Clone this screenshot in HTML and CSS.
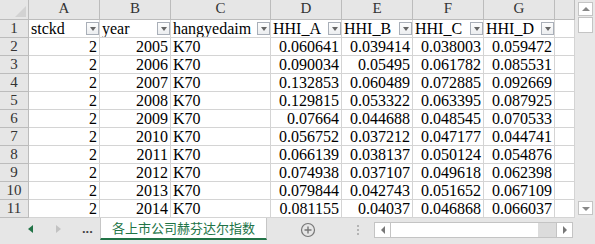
FILE: index.html
```html
<!DOCTYPE html>
<html>
<head>
  <title>各上市公司赫芬达尔指数</title>
  <link rel="stylesheet" href="styles.css">
</head>
<body>
<div class="excel">
  <div class="top">
    <div class="sheet">
      <div class="row head">
        <div class="corner"><span class="tri"></span></div>
        <div class="colhead">A</div>
        <div class="colhead">B</div>
        <div class="colhead">C</div>
        <div class="colhead">D</div>
        <div class="colhead">E</div>
        <div class="colhead">F</div>
        <div class="colhead">G</div>
        <div class="colhead"></div>
      </div>
      <div class="row">
        <div class="rowhead">1</div>
        <div class="cell field">stckd<span class="filter"></span></div>
        <div class="cell field">year<span class="filter"></span></div>
        <div class="cell field">hangyedaim<span class="filter"></span></div>
        <div class="cell field">HHI_A<span class="filter"></span></div>
        <div class="cell field">HHI_B<span class="filter"></span></div>
        <div class="cell field">HHI_C<span class="filter"></span></div>
        <div class="cell field">HHI_D<span class="filter"></span></div>
        <div class="cell"></div>
      </div>
      <div class="row">
        <div class="rowhead">2</div>
        <div class="cell num">2</div><div class="cell num">2005</div><div class="cell">K70</div>
        <div class="cell num">0.060641</div><div class="cell num">0.039414</div><div class="cell num">0.038003</div><div class="cell num">0.059472</div>
        <div class="cell"></div>
      </div>
      <div class="row">
        <div class="rowhead">3</div>
        <div class="cell num">2</div><div class="cell num">2006</div><div class="cell">K70</div>
        <div class="cell num">0.090034</div><div class="cell num">0.05495</div><div class="cell num">0.061782</div><div class="cell num">0.085531</div>
        <div class="cell"></div>
      </div>
      <div class="row">
        <div class="rowhead">4</div>
        <div class="cell num">2</div><div class="cell num">2007</div><div class="cell">K70</div>
        <div class="cell num">0.132853</div><div class="cell num">0.060489</div><div class="cell num">0.072885</div><div class="cell num">0.092669</div>
        <div class="cell"></div>
      </div>
      <div class="row">
        <div class="rowhead">5</div>
        <div class="cell num">2</div><div class="cell num">2008</div><div class="cell">K70</div>
        <div class="cell num">0.129815</div><div class="cell num">0.053322</div><div class="cell num">0.063395</div><div class="cell num">0.087925</div>
        <div class="cell"></div>
      </div>
      <div class="row">
        <div class="rowhead">6</div>
        <div class="cell num">2</div><div class="cell num">2009</div><div class="cell">K70</div>
        <div class="cell num">0.07664</div><div class="cell num">0.044688</div><div class="cell num">0.048545</div><div class="cell num">0.070533</div>
        <div class="cell"></div>
      </div>
      <div class="row">
        <div class="rowhead">7</div>
        <div class="cell num">2</div><div class="cell num">2010</div><div class="cell">K70</div>
        <div class="cell num">0.056752</div><div class="cell num">0.037212</div><div class="cell num">0.047177</div><div class="cell num">0.044741</div>
        <div class="cell"></div>
      </div>
      <div class="row">
        <div class="rowhead">8</div>
        <div class="cell num">2</div><div class="cell num">2011</div><div class="cell">K70</div>
        <div class="cell num">0.066139</div><div class="cell num">0.038137</div><div class="cell num">0.050124</div><div class="cell num">0.054876</div>
        <div class="cell"></div>
      </div>
      <div class="row">
        <div class="rowhead">9</div>
        <div class="cell num">2</div><div class="cell num">2012</div><div class="cell">K70</div>
        <div class="cell num">0.074938</div><div class="cell num">0.037107</div><div class="cell num">0.049618</div><div class="cell num">0.062398</div>
        <div class="cell"></div>
      </div>
      <div class="row">
        <div class="rowhead">10</div>
        <div class="cell num">2</div><div class="cell num">2013</div><div class="cell">K70</div>
        <div class="cell num">0.079844</div><div class="cell num">0.042743</div><div class="cell num">0.051652</div><div class="cell num">0.067109</div>
        <div class="cell"></div>
      </div>
      <div class="row">
        <div class="rowhead">11</div>
        <div class="cell num">2</div><div class="cell num">2014</div><div class="cell">K70</div>
        <div class="cell num">0.081155</div><div class="cell num">0.04037</div><div class="cell num">0.046868</div><div class="cell num">0.066037</div>
        <div class="cell"></div>
      </div>
    </div>

    <div class="vscroll">
      <div class="sbtn up"></div>
      <div class="vthumb"></div>
      <div class="vtrack"></div>
      <div class="sbtn down"></div>
    </div>
  </div>

  <div class="tabbar">
    <div class="nav">
      <span class="arrow prev"></span>
      <span class="arrow next"></span>
      <span class="more">...</span>
    </div>
    <div class="tab">各上市公司赫芬达尔指数</div>
    <svg class="add" width="16" height="16" viewBox="0 0 16 16">
      <circle cx="8" cy="8" r="6.5" fill="none" stroke="#777" stroke-width="1.2"/>
      <path d="M8 4.5v7M4.5 8h7" stroke="#777" stroke-width="1.4"/>
    </svg>
    <span class="dots"></span>
    <div class="hscroll">
      <div class="sbtn left"></div>
      <div class="hthumb"></div>
      <div class="htrack"></div>
      <div class="sbtn right"></div>
    </div>
  </div>
</div>
</body>
</html>
```

FILE: styles.css
```css
body {
  margin: 0;
  overflow: hidden;
  background: #e6e6e6;
}
.excel {
  width: 595px;
  height: 244px;
  display: flex;
  flex-direction: column;
}
.top {
  display: flex;
  height: 218px;
}
.sheet {
  width: 575px;
  background: #fff;
}
.row {
  display: grid;
  grid-template-columns: 29px 71px 71px 100px 71px 71px 71px 71px 20px;
  height: 18px;
}
.row.head {
  height: 20px;
}
.row > div {
  box-sizing: border-box;
  border-right: 1px solid #d4d4d4;
  border-bottom: 1px solid #d4d4d4;
  overflow: hidden;
  white-space: nowrap;
  font-family: "Liberation Serif", serif;
  font-size: 16px;
  line-height: 17px;
  color: #000;
}
.corner {
  background: #e6e6e6;
  display: flex;
  align-items: flex-end;
  justify-content: flex-end;
  padding: 0 2px 2px 0;
}
.row > .corner,
.row > .colhead,
.row > .rowhead {
  border-color: #bcbcbc;
  font-size: 15px;
  color: #333;
}
.tri {
  width: 0;
  height: 0;
  border-left: 11px solid transparent;
  border-bottom: 11px solid #d2d2d2;
}
.colhead {
  background: #e6e6e6;
  text-align: center;
  line-height: 19px;
}
.rowhead {
  background: #e6e6e6;
  text-align: center;
}
.cell {
  padding: 0 2px 0 2px;
}
.num {
  text-align: right;
}
.field {
  display: flex;
  align-items: center;
  justify-content: space-between;
  padding-right: 0;
}
.filter {
  flex: none;
  position: relative;
  width: 13px;
  height: 13px;
  box-sizing: border-box;
  border: 1px solid #a9afb8;
  background: linear-gradient(#fdfdfd, #eceef0);
}
.filter::after {
  content: "";
  position: absolute;
  left: 3px;
  top: 4px;
  border-left: 3px solid transparent;
  border-right: 3px solid transparent;
  border-top: 4px solid #666;
}

/* scrollbars */
.vscroll {
  width: 20px;
  display: flex;
  flex-direction: column;
  align-items: center;
  padding-top: 2px;
  box-sizing: border-box;
  background: #e8e8e8;
}
.sbtn {
  position: relative;
  box-sizing: border-box;
  width: 15px;
  height: 14px;
  border: 1px solid #c4c4c4;
  background: #fff;
}
.sbtn::after {
  content: "";
  position: absolute;
  left: 3px;
  top: 4px;
  border-left: 4px solid transparent;
  border-right: 4px solid transparent;
}
.sbtn.up::after {
  border-bottom: 4px solid #888;
}
.sbtn.down::after {
  top: 5px;
  border-top: 4px solid #888;
}
.vthumb {
  width: 15px;
  height: 16px;
  margin-top: 1px;
  box-sizing: border-box;
  border: 1px solid #c4c4c4;
  background: #fff;
}
.vtrack {
  flex: 1;
}
.sbtn.down {
  margin-bottom: 3px;
}

/* sheet tabs */
.tabbar {
  flex: 1;
  display: flex;
  align-items: flex-start;
  background: #e6e6e6;
}
.nav {
  width: 100px;
  height: 22px;
  display: flex;
  align-items: center;
  padding-left: 28px;
  box-sizing: border-box;
}
.arrow {
  width: 0;
  height: 0;
  border-top: 4px solid transparent;
  border-bottom: 4px solid transparent;
}
.arrow.prev {
  border-right: 5px solid #217346;
}
.arrow.next {
  margin-left: 23px;
  border-left: 5px solid #c2c2c2;
}
.more {
  margin-left: 21px;
  font-family: "Liberation Sans", sans-serif;
  font-size: 13px;
  font-weight: bold;
  color: #444;
  line-height: 22px;
}
.tab {
  width: 167px;
  height: 22px;
  box-sizing: border-box;
  background: #fff;
  border-left: 1px solid #c6c6c6;
  border-right: 1px solid #c6c6c6;
  border-bottom: 2px solid #217346;
  text-align: center;
  font-family: "Noto Sans CJK SC", sans-serif;
  font-size: 13px;
  line-height: 20px;
  color: #217346;
}
.add {
  margin: 4px 0 0 33px;
}
.dots {
  margin: 7px 0 0 41px;
  width: 2px;
  height: 11px;
  background: repeating-linear-gradient(#b4b4b4 0 2px, transparent 2px 4px);
}
.hscroll {
  margin: 4px 0 0 15px;
  width: 199px;
  height: 16px;
  display: flex;
  box-sizing: border-box;
  border: 1px solid #c4c4c4;
  background: #fff;
}
.hscroll .sbtn {
  width: 16px;
  height: 14px;
  border: none;
}
.sbtn.left {
  border-right: 1px solid #c4c4c4;
}
.sbtn.right {
  border-left: 1px solid #c4c4c4;
}
.sbtn.left::after,
.sbtn.right::after {
  left: 6px;
  top: 3px;
  border-top: 4px solid transparent;
  border-bottom: 4px solid transparent;
  border-left: none;
  border-right: none;
}
.sbtn.left::after {
  border-right: 4px solid #777;
}
.sbtn.right::after {
  border-left: 4px solid #777;
}
.hthumb {
  width: 147px;
}
.htrack {
  flex: 1;
  background: #dcdcdc;
}
```
